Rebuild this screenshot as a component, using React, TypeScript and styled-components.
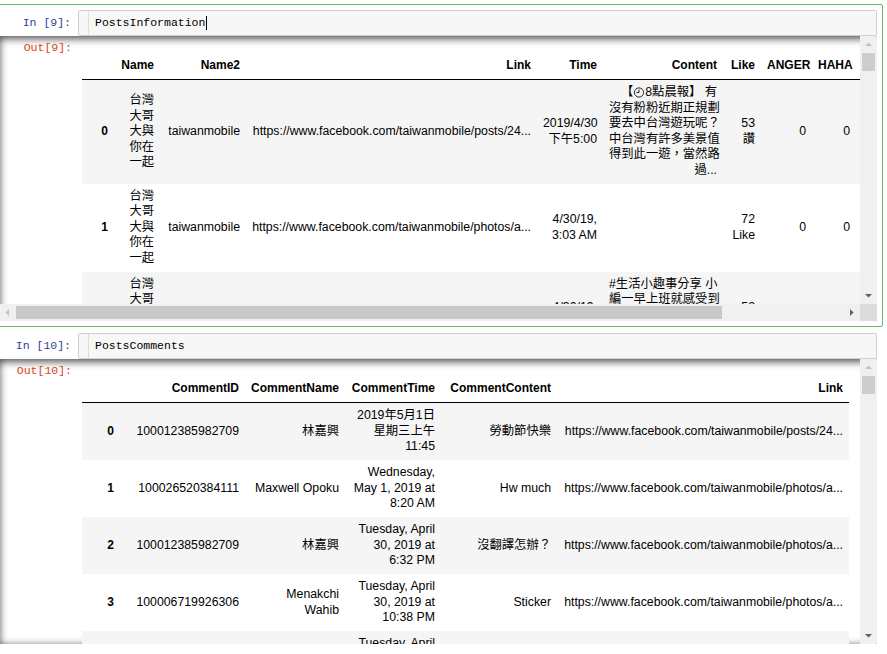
import React from 'react';
import styled, { createGlobalStyle } from 'styled-components';

const MONO = `"Liberation Mono", "DejaVu Sans Mono", monospace`;
const SANS = `"Liberation Sans", Arial, "Noto Sans CJK TC", sans-serif`;

const GlobalStyle = createGlobalStyle`
  html, body { margin: 0; padding: 0; background: #ffffff; }
  body { overflow: hidden; }
`;

const Notebook = styled.div`
  width: 887px;
  height: 654px;
  overflow: hidden;
  padding-top: 4px;
  box-sizing: border-box;
`;

const Cell = styled.div<{ $selected?: boolean }>`
  box-sizing: border-box;
  width: 890px;
  margin-left: -7px;
  padding: 5px;
  border: 1px solid ${({ $selected }) => ($selected ? '#66bb6a' : 'transparent')};
  border-radius: 2px;
`;

const InputRow = styled.div`
  display: flex;
  align-items: stretch;
`;

const Prompt = styled.div<{ $kind: 'in' | 'out' }>`
  flex: none;
  width: 79px;
  box-sizing: border-box;
  padding: ${({ $kind }) => ($kind === 'in' ? '5px 7px 0 0' : '4px 6px 0 0')};
  text-align: right;
  font-family: ${MONO};
  font-size: 11.5px;
  line-height: 15px;
  color: ${({ $kind }) => ($kind === 'in' ? '#303f9f' : '#d84315')};
  white-space: nowrap;
`;

const InputArea = styled.div`
  flex: 1;
  display: flex;
  height: 26px;
  box-sizing: border-box;
  border: 1px solid #cfcfcf;
  border-radius: 2px;
  background: #f7f7f7;
`;

const Gutter = styled.div`
  flex: none;
  width: 10px;
  box-sizing: border-box;
  border-right: 1px solid #dddddd;
`;

const CodeLine = styled.div`
  display: flex;
  align-items: center;
  padding-left: 6px;
  font-family: ${MONO};
  font-size: 11.5px;
  line-height: 24px;
  color: #000;
  white-space: pre;
`;

const Cursor = styled.span`
  display: inline-block;
  width: 1px;
  height: 14px;
  margin-left: 1px;
  background: #000;
`;

const OutputScroll = styled.div<{ $hasH: boolean }>`
  height: 285px;
  display: grid;
  grid-template-columns: minmax(0, 1fr) 17px;
  grid-template-rows: ${({ $hasH }) => ($hasH ? 'minmax(0, 1fr) 17px' : 'minmax(0, 1fr)')};
  box-shadow: inset 0 2px 8px rgba(0, 0, 0, 0.8);
  border-radius: 2px;
  overflow: hidden;
`;

const Viewport = styled.div`
  display: flex;
  align-items: flex-start;
  overflow: hidden;
  min-width: 0;
  min-height: 0;
`;

const Subarea = styled.div`
  flex: none;
  padding: 4px;
`;

const DataTable = styled.table<{ $width: number }>`
  width: ${({ $width }) => $width}px;
  table-layout: fixed;
  border-collapse: collapse;
  border-spacing: 0;
  margin-top: 12px;
  font-family: ${SANS};
  font-size: 12px;
  line-height: 15px;
  color: #000;
`;

const HeadCell = styled.th`
  padding: 6px;
  text-align: right;
  vertical-align: middle;
  font-weight: bold;
  font-size: 12px;
  line-height: 15px;
  border-bottom: 1px solid #000;
  white-space: pre;
  overflow: hidden;
`;

const BodyRow = styled.tr<{ $striped: boolean }>`
  background: ${({ $striped }) => ($striped ? '#f5f5f5' : 'transparent')};
`;

const IndexCell = styled.th`
  padding: 5.25px 6px;
  text-align: right;
  vertical-align: middle;
  font-weight: bold;
  font-size: 12px;
  line-height: 15.5px;
`;

const DataCell = styled.td`
  padding: 5.25px 6px;
  text-align: right;
  vertical-align: middle;
  white-space: pre;
  font-size: 12.3px;
  line-height: 15.5px;
`;

const VBar = styled.div`
  display: flex;
  flex-direction: column;
  background: #f0f0f0;
  min-height: 0;
`;

const HBar = styled.div`
  display: flex;
  background: #f0f0f0;
  min-width: 0;
`;

const Corner = styled.div`
  background: #dcdcdc;
`;

const ArrowBox = styled.div`
  flex: none;
  width: 17px;
  height: 17px;
  display: flex;
  align-items: center;
  justify-content: center;
`;

const VThumb = styled.div<{ $size: number }>`
  flex: none;
  height: ${({ $size }) => $size}px;
  margin: 0 2px;
  background: #cdcdcd;
`;

const HThumb = styled.div<{ $size: number }>`
  flex: none;
  width: ${({ $size }) => $size}px;
  margin: 2px 0;
  background: #c8c8c8;
`;

const Track = styled.div`
  flex: 1;
`;

const ClockSvg = styled.svg`
  display: inline-block;
  vertical-align: -2px;
`;

type Dir = 'up' | 'down' | 'left' | 'right';
const ARROW_POINTS: Record<Dir, string> = {
  up: '0,5 3.5,1.5 7,5',
  down: '0,2 3.5,5.5 7,2',
  left: '5,0 1.5,3.5 5,7',
  right: '2,0 5.5,3.5 2,7',
};

const Arrow = ({ dir, disabled }: { dir: Dir; disabled?: boolean }) => (
  <ArrowBox>
    <svg width="7" height="7" viewBox="0 0 7 7">
      <polygon points={ARROW_POINTS[dir]} fill={disabled ? '#c2c2c2' : '#606060'} />
    </svg>
  </ArrowBox>
);

const ClockIcon = () => (
  <ClockSvg width="12" height="12" viewBox="0 0 12 12">
    <circle cx="6" cy="6.5" r="4.6" fill="none" stroke="#222" strokeWidth="1" />
    <path d="M6 6.5V3.6M6 6.5H3.4" stroke="#222" strokeWidth="1" fill="none" />
  </ClockSvg>
);

type Row = React.ReactNode[];

interface TableSpec {
  columns: { title: string; width: number }[];
  rows: Row[];
}

const NAME = '台灣\n大哥\n大與\n你在\n一起';

const posts: TableSpec = {
  columns: [
    { title: '', width: 32 },
    { title: 'Name', width: 46 },
    { title: 'Name2', width: 86 },
    { title: 'Link', width: 291 },
    { title: 'Time', width: 66 },
    { title: 'Content', width: 120 },
    { title: 'Like', width: 38 },
    { title: 'ANGER', width: 51 },
    { title: 'HAHA', width: 44 },
    { title: 'LOVE', width: 50 },
    { title: 'SAD', width: 45 },
    { title: 'WOW', width: 60 },
  ],
  rows: [
    [
      '0',
      NAME,
      'taiwanmobile',
      'https://www.facebook.com/taiwanmobile/posts/24...',
      '2019/4/30\n下午5:00',
      <>
        【<ClockIcon />8點晨報】 有{'\n'}沒有粉粉近期正規劃{'\n'}要去中台灣遊玩呢？{'\n'}中台灣有許多美景值{'\n'}得到此一遊，當然路{'\n'}過...
      </>,
      '53\n讚',
      '0',
      '0',
      '0',
      '0',
      '0',
    ],
    [
      '1',
      NAME,
      'taiwanmobile',
      'https://www.facebook.com/taiwanmobile/photos/a...',
      '4/30/19,\n3:03 AM',
      '',
      '72\nLike',
      '0',
      '0',
      '0',
      '0',
      '0',
    ],
    [
      '2',
      NAME,
      'taiwanmobile',
      'https://www.facebook.com/taiwanmobile/photos/a...',
      '4/30/19,\n6:00 AM',
      '#生活小趣事分享 小\n編一早上班就感受到\n滿滿的好心情，大家\n今天也要開心上班喔\n！...',
      '52\n讚',
      '0',
      '0',
      '0',
      '0',
      '0',
    ],
  ],
};

const comments: TableSpec = {
  columns: [
    { title: '', width: 38 },
    { title: 'CommentID', width: 125 },
    { title: 'CommentName', width: 100 },
    { title: 'CommentTime', width: 96 },
    { title: 'CommentContent', width: 116 },
    { title: 'Link', width: 292 },
  ],
  rows: [
    ['0', '100012385982709', '林嘉興', '2019年5月1日\n星期三上午\n11:45', '勞動節快樂', 'https://www.facebook.com/taiwanmobile/posts/24...'],
    ['1', '100026520384111', 'Maxwell Opoku', 'Wednesday,\nMay 1, 2019 at\n8:20 AM', 'Hw much', 'https://www.facebook.com/taiwanmobile/photos/a...'],
    ['2', '100012385982709', '林嘉興', 'Tuesday, April\n30, 2019 at\n6:32 PM', '沒翻譯怎辦？', 'https://www.facebook.com/taiwanmobile/photos/a...'],
    ['3', '100006719926306', 'Menakchi\nWahib', 'Tuesday, April\n30, 2019 at\n10:38 PM', 'Sticker', 'https://www.facebook.com/taiwanmobile/photos/a...'],
    ['4', '100012385982709', '林嘉興', 'Tuesday, April\n30, 2019 at\n6:40 PM', '讚', 'https://www.facebook.com/taiwanmobile/photos/a...'],
  ],
};

const Frame = ({ spec }: { spec: TableSpec }) => {
  const width = spec.columns.reduce((s, c) => s + c.width, 0);
  return (
    <DataTable $width={width}>
      <colgroup>
        {spec.columns.map((c, i) => (
          <col key={i} style={{ width: c.width }} />
        ))}
      </colgroup>
      <thead>
        <tr>
          {spec.columns.map((c, i) => (
            <HeadCell key={i}>{c.title}</HeadCell>
          ))}
        </tr>
      </thead>
      <tbody>
        {spec.rows.map((row, r) => (
          <BodyRow key={r} $striped={r % 2 === 0}>
            {row.map((v, i) =>
              i === 0 ? <IndexCell key={i}>{v}</IndexCell> : <DataCell key={i}>{v}</DataCell>,
            )}
          </BodyRow>
        ))}
      </tbody>
    </DataTable>
  );
};

interface CodeCellProps {
  n: number;
  code: string;
  selected?: boolean;
  spec: TableSpec;
  hThumb?: number;
  vThumb: number;
}

const CodeCell = ({ n, code, selected, spec, hThumb, vThumb }: CodeCellProps) => (
  <Cell $selected={selected}>
    <InputRow>
      <Prompt $kind="in">In [{n}]:</Prompt>
      <InputArea>
        <Gutter />
        <CodeLine>
          {code}
          {selected && <Cursor />}
        </CodeLine>
      </InputArea>
    </InputRow>
    <OutputScroll $hasH={hThumb !== undefined}>
      <Viewport>
        <Prompt $kind="out">Out[{n}]:</Prompt>
        <Subarea>
          <Frame spec={spec} />
        </Subarea>
      </Viewport>
      <VBar>
        <Arrow dir="up" disabled />
        <VThumb $size={vThumb} />
        <Track />
        <Arrow dir="down" />
      </VBar>
      {hThumb !== undefined && (
        <>
          <HBar>
            <Arrow dir="left" disabled />
            <HThumb $size={hThumb} />
            <Track />
            <Arrow dir="right" />
          </HBar>
          <Corner />
        </>
      )}
    </OutputScroll>
  </Cell>
);

export default function App() {
  return (
    <>
      <GlobalStyle />
      <Notebook>
        <CodeCell n={9} code="PostsInformation" selected spec={posts} hThumb={706} vThumb={18} />
        <CodeCell n={10} code="PostsComments" spec={comments} vThumb={18} />
      </Notebook>
    </>
  );
}
